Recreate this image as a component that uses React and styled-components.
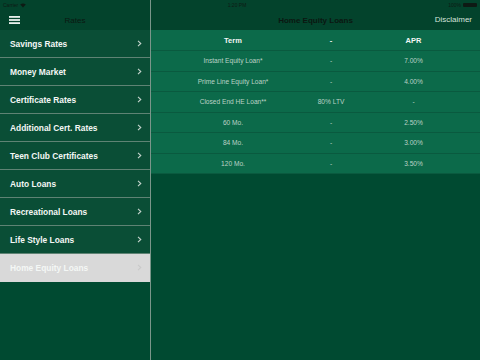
import React from "react";
import styled, { createGlobalStyle } from "styled-components";

const GlobalStyle = createGlobalStyle`
  html, body {
    margin: 0;
    padding: 0;
    background: #004a31;
  }
  body {
    font-family: "Liberation Sans", Arial, sans-serif;
  }
`;

const menuItems = [
  "Savings Rates",
  "Money Market",
  "Certificate Rates",
  "Additional Cert. Rates",
  "Teen Club Certificates",
  "Auto Loans",
  "Recreational Loans",
  "Life Style Loans",
  "Home Equity Loans",
];

const rates = [
  { term: "Instant Equity Loan*", mid: "-", apr: "7.00%" },
  { term: "Prime Line Equity Loan*", mid: "-", apr: "4.00%" },
  { term: "Closed End HE Loan**", mid: "80% LTV", apr: "-" },
  { term: "60 Mo.", mid: "-", apr: "2.50%" },
  { term: "84 Mo.", mid: "-", apr: "3.00%" },
  { term: "120 Mo.", mid: "-", apr: "3.50%" },
];

const Chevron = ({ color }) => (
  <svg width="5" height="7" viewBox="0 0 5 7">
    <path d="M1 0.8 L3.8 3.5 L1 6.2" fill="none" stroke={color} strokeWidth="1.1" />
  </svg>
);

const Hamburger = () => (
  <svg width="11" height="8" viewBox="0 0 11 8">
    <rect x="0" y="0" width="11" height="1.8" fill="#e8efeb" />
    <rect x="0" y="3.1" width="11" height="1.8" fill="#e8efeb" />
    <rect x="0" y="6.2" width="11" height="1.8" fill="#e8efeb" />
  </svg>
);

const Wifi = () => (
  <svg width="6" height="5" viewBox="0 0 6 5">
    <path d="M3 4.6 L0.2 1.6 Q3 -0.6 5.8 1.6 Z" fill="#0e1a14" />
  </svg>
);

const App = () => {
  return (
    <Screen>
      <GlobalStyle />
      <StatusBar>
        <StatusLeft>
          Carrier <Wifi />
        </StatusLeft>
        <StatusCenter>1:20 PM</StatusCenter>
        <StatusRight>
          100%
          <Battery />
        </StatusRight>
      </StatusBar>

      <Master>
        <NavBar>
          <MenuButton>
            <Hamburger />
          </MenuButton>
          <NavTitle>Rates</NavTitle>
        </NavBar>
        <Menu>
          {menuItems.map((item, i) => {
            const active = i === menuItems.length - 1;
            return (
              <MenuRow key={item} active={active}>
                <span>{item}</span>
                <Chevron color={active ? "#c9c9c9" : "#c5d4cc"} />
              </MenuRow>
            );
          })}
        </Menu>
      </Master>

      <Detail>
        <NavBar>
          <NavTitle bold>Home Equity Loans</NavTitle>
          <NavAction>Disclaimer</NavAction>
        </NavBar>
        <Table>
          <HeaderRow>
            <Cell head>Term</Cell>
            <Cell head>-</Cell>
            <Cell head>APR</Cell>
          </HeaderRow>
          {rates.map((r) => (
            <Row key={r.term}>
              <Cell>{r.term}</Cell>
              <Cell>{r.mid}</Cell>
              <Cell>{r.apr}</Cell>
            </Row>
          ))}
        </Table>
      </Detail>
    </Screen>
  );
};

export default App;

const Screen = styled.div`
  position: relative;
  width: 480px;
  height: 360px;
  display: flex;
  overflow: hidden;
  background: #004a31;
`;

const StatusBar = styled.div`
  position: absolute;
  top: 0;
  left: 0;
  right: 0;
  height: 10px;
  display: flex;
  align-items: center;
  padding: 0 3px;
  font-size: 5px;
  color: #0e1a14;
  z-index: 2;
`;

const StatusLeft = styled.div`
  width: 120px;
  display: flex;
  align-items: center;
  gap: 2px;
`;

const StatusCenter = styled.div`
  flex: 1;
  text-align: center;
  margin-right: 6px;
`;

const StatusRight = styled.div`
  width: 120px;
  display: flex;
  justify-content: flex-end;
  align-items: center;
  gap: 2px;
`;

const Battery = styled.div`
  width: 14px;
  height: 4px;
  background: #0e1a14;
  border-radius: 1px;
`;

const Master = styled.div`
  width: 150px;
  flex: none;
  border-right: 1px solid #7a968a;
  display: flex;
  flex-direction: column;
  background: #004a31;
`;

const Detail = styled.div`
  flex: 1;
  display: flex;
  flex-direction: column;
`;

const NavBar = styled.div`
  position: relative;
  height: 30px;
  box-sizing: border-box;
  padding-top: 10px;
  background: #03432c;
  display: flex;
  align-items: center;
  justify-content: center;
  flex: none;
`;

const MenuButton = styled.div`
  position: absolute;
  left: 9px;
  top: 16px;
  display: flex;
`;

const NavTitle = styled.div`
  font-size: 8px;
  font-weight: ${({ bold }) => (bold ? 700 : 400)};
  color: #0b1711;
`;

const NavAction = styled.div`
  position: absolute;
  right: 8px;
  top: 15px;
  font-size: 8px;
  color: #d5e2db;
`;

const Menu = styled.div`
  display: flex;
  flex-direction: column;
`;

const MenuRow = styled.div`
  height: 28px;
  box-sizing: border-box;
  border-bottom: 1px solid ${({ active }) => (active ? "#d9d9d9" : "#5f8374")};
  background: ${({ active }) => (active ? "#d9d9d9" : "#0a4e36")};
  color: #f4f7f5;
  font-size: 8.4px;
  font-weight: 700;
  display: flex;
  align-items: center;
  justify-content: space-between;
  padding: 0 8px 0 10px;
`;

const Table = styled.div`
  display: flex;
  flex-direction: column;
  background: #0c6a4a;
`;

const Row = styled.div`
  display: grid;
  grid-template-columns: 164px 32px 1fr;
  height: 20.5px;
  box-sizing: border-box;
  border-bottom: 1px solid #0a5a3f;
  align-items: center;
`;

const HeaderRow = styled(Row)`
  height: 21px;
`;

const Cell = styled.div`
  text-align: center;
  white-space: nowrap;
  display: flex;
  justify-content: center;
  font-size: ${({ head }) => (head ? "7.5px" : "6.6px")};
  font-weight: ${({ head }) => (head ? 700 : 400)};
  color: ${({ head }) => (head ? "#f2f6f4" : "#bcd2c6")};
`;
